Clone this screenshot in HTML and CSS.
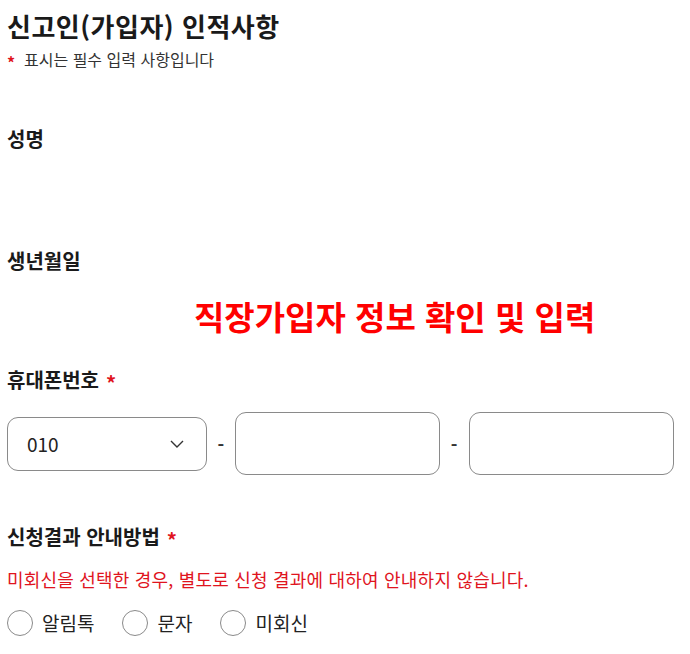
FILE: index.html
```html
<!DOCTYPE html>
<html lang="ko">
<head>
<meta charset="utf-8">
<title>신고인(가입자) 인적사항</title>
<link rel="stylesheet" href="styles.css">
</head>
<body>
<main class="form">
  <header class="form-head">
    <h1 class="title">신고인(가입자) 인적사항</h1>
    <p class="req-note"><span class="star">*</span>표시는 필수 입력 사항입니다</p>
  </header>

  <section class="field field-name">
    <h2 class="label">성명</h2>
  </section>

  <section class="field field-birth">
    <h2 class="label">생년월일</h2>
  </section>

  <p class="banner">직장가입자 정보 확인 및 입력</p>

  <section class="field field-phone">
    <h2 class="label">휴대폰번호<span class="star">*</span></h2>
    <div class="phone-row">
      <div class="select">
        <span class="select-value">010</span>
        <svg class="chev" width="14" height="8" viewBox="0 0 14 8"><path d="M1 1 L7 7 L13 1" fill="none" stroke="#333" stroke-width="1.4"/></svg>
      </div>
      <span class="dash dash-1">-</span>
      <div class="input input-mid"></div>
      <span class="dash dash-2">-</span>
      <div class="input input-last"></div>
    </div>
  </section>

  <section class="field field-notice">
    <h2 class="label">신청결과 안내방법<span class="star">*</span></h2>
    <p class="warn">미회신을 선택한 경우, 별도로 신청 결과에 대하여 안내하지 않습니다.</p>
    <div class="radios">
      <label class="radio"><span class="circle"></span>알림톡</label>
      <label class="radio"><span class="circle"></span>문자</label>
      <label class="radio"><span class="circle"></span>미회신</label>
    </div>
  </section>
</main>
</body>
</html>
```
FILE: styles.css
```css
* { box-sizing: border-box; }
html, body { margin: 0; padding: 0; background: #fff; }
body {
  font-family: "Noto Sans CJK KR", "Noto Sans", sans-serif;
  color: #222;
}
.form { padding: 6px 16px 0 7px; }
.title {
  margin: 0;
  font-size: 26px;
  font-weight: 700;
  line-height: 40px;
  letter-spacing: 0.5px;
  color: #1a1a1a;
}
.req-note {
  margin: 2px 0 0;
  font-size: 16px;
  line-height: 22px;
  color: #333;
}
.star { color: #e0141e; font-weight: 700; }
.req-note .star {
  display: inline-block;
  width: 17px;
  font-size: 16px;
  position: relative;
  top: 3px;
}
.label .star {
  margin-left: 7px;
  position: relative;
  top: 3px;
}
.label {
  margin: 0;
  font-size: 20px;
  font-weight: 700;
  line-height: 28px;
  color: #1a1a1a;
}
.field-name { margin-top: 55px; }
.field-birth { margin-top: 94px; }
.banner {
  margin: 19px 0 0 187px;
  font-size: 33px;
  font-weight: 700;
  line-height: 44px;
  color: #ff0000;
}
.field-phone { margin-top: 28px; }
.phone-row {
  display: flex;
  align-items: center;
  margin-top: 18px;
}
.select {
  width: 200px;
  height: 54px;
  border: 1.5px solid #8a8a8a;
  border-radius: 11px;
  display: flex;
  align-items: center;
  justify-content: space-between;
  padding: 0 22px 0 19px;
  font-size: 19px;
  color: #222;
}
.dash {
  text-align: center;
  font-size: 18px;
  font-weight: 700;
  color: #333;
}
.dash-1 { width: 29px; }
.dash-2 { width: 29px; }
.input {
  height: 63px;
  border: 1.5px solid #8a8a8a;
  border-radius: 11px;
}
.input-mid { width: 205px; }
.input-last { width: 206px; }
.field-notice { margin-top: 48px; }
.warn {
  margin: 15px 0 0;
  font-size: 18px;
  line-height: 26px;
  letter-spacing: 0.2px;
  color: #e0141e;
}
.radios {
  display: flex;
  align-items: center;
  margin-top: 17px;
}
.radio {
  display: flex;
  align-items: center;
  font-size: 19px;
  line-height: 28px;
  color: #222;
  margin-right: 28px;
}
.radio .circle {
  width: 26px;
  height: 26px;
  border: 1.5px solid #8a8a8a;
  border-radius: 50%;
  margin-right: 9px;
  flex: none;
}
```
